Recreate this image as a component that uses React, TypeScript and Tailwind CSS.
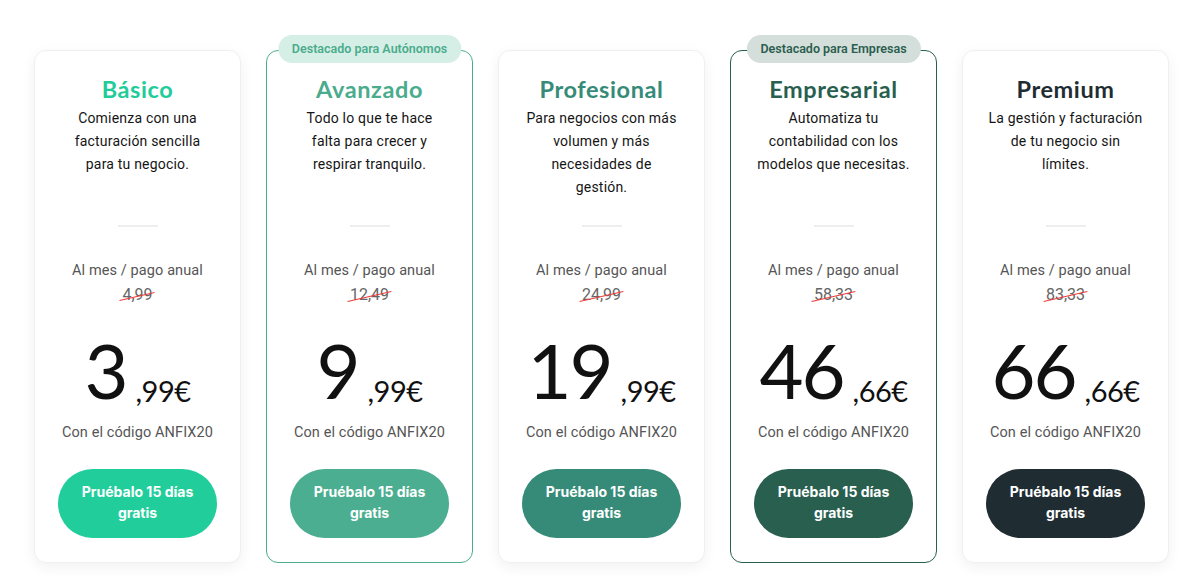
import React from "react";

interface Plan {
    name: string;
    lines: string[];
    oldPrice: string;
    whole: string;
    cents: string;
    titleClass: string;
    buttonClass: string;
    cardClass: string;
    badge?: string;
    badgeClass?: string;
}

const plans: Plan[] = [
    {
        name: "Básico",
        lines: ["Comienza con una", "facturación sencilla", "para tu negocio."],
        oldPrice: "4,99",
        whole: "3",
        cents: ",99€",
        titleClass: "text-[#22cc99]",
        buttonClass: "bg-[#21ce9b]",
        cardClass: "border-[#f0f0f0] shadow-[0_4px_14px_rgba(0,0,0,0.06)]",
    },
    {
        name: "Avanzado",
        lines: ["Todo lo que te hace", "falta para crecer y", "respirar tranquilo."],
        oldPrice: "12,49",
        whole: "9",
        cents: ",99€",
        titleClass: "text-[#4aac8d]",
        buttonClass: "bg-[#4bae90]",
        cardClass: "border-[#4aac8d]",
        badge: "Destacado para Autónomos",
        badgeClass: "bg-[#d6efe6] text-[#4aac8d]",
    },
    {
        name: "Profesional",
        lines: ["Para negocios con más", "volumen y más", "necesidades de", "gestión."],
        oldPrice: "24,99",
        whole: "19",
        cents: ",99€",
        titleClass: "text-[#368b78]",
        buttonClass: "bg-[#368b78]",
        cardClass: "border-[#f0f0f0] shadow-[0_4px_14px_rgba(0,0,0,0.06)]",
    },
    {
        name: "Empresarial",
        lines: ["Automatiza tu", "contabilidad con los", "modelos que necesitas."],
        oldPrice: "58,33",
        whole: "46",
        cents: ",66€",
        titleClass: "text-[#285f4f]",
        buttonClass: "bg-[#285f4f]",
        cardClass: "border-[#285f4f]",
        badge: "Destacado para Empresas",
        badgeClass: "bg-[#d4deda] text-[#2b5e4f]",
    },
    {
        name: "Premium",
        lines: ["La gestión y facturación", "de tu negocio sin", "límites."],
        oldPrice: "83,33",
        whole: "66",
        cents: ",66€",
        titleClass: "text-[#1f2d33]",
        buttonClass: "bg-[#1f2d33]",
        cardClass: "border-[#f0f0f0] shadow-[0_4px_14px_rgba(0,0,0,0.06)]",
    },
];

const PlanCard: React.FC<{ plan: Plan }> = ({ plan }) => {
    return (
        <div
            className={`relative w-[207px] shrink-0 rounded-[12px] border bg-white flex flex-col items-center pt-[24px] pb-[24px] ${plan.cardClass}`}
        >
            {plan.badge && (
                <div
                    className={`absolute -top-[16px] left-1/2 -translate-x-1/2 h-[28px] px-[14px] rounded-full flex items-center whitespace-nowrap text-[12.5px] font-semibold font-['Roboto',sans-serif] ${plan.badgeClass}`}
                >
                    {plan.badge}
                </div>
            )}
            <h2
                className={`text-[23.5px] leading-[28px] font-bold tracking-[0.6px] font-['Lato',sans-serif] ${plan.titleClass}`}
            >
                {plan.name}
            </h2>
            <div className="h-[118px] mt-[4px] w-[190px] flex flex-col items-center">
                {plan.lines.map((line) => (
                    <p
                        key={line}
                        className="whitespace-nowrap text-center text-[14px] leading-[23px] tracking-[0.2px] text-[#151515] font-['Roboto',sans-serif]"
                    >
                        {line}
                    </p>
                ))}
            </div>
            <div className="w-[40px] h-[2px] bg-[#eeeeee]" />
            <p className="mt-[34px] text-[14.5px] leading-[20px] tracking-[0.1px] text-[#555] font-['Roboto',sans-serif]">
                Al mes / pago anual
            </p>
            <span className="relative mt-[4px] text-[16px] leading-[20px] text-[#666] font-['Roboto',sans-serif]">
                {plan.oldPrice}
                <span className="absolute left-[-3px] right-[-3px] top-[11px] h-[1px] bg-[#f03a3a] -rotate-[13deg]" />
            </span>
            <div className="mt-[27px] flex items-baseline gap-[9px] font-['Lato',sans-serif] text-[#111]">
                <span className="text-[76px] leading-none font-normal tracking-[-2px]">{plan.whole}</span>
                <span className="text-[29px] leading-none translate-y-[3px] tracking-[-0.5px]">
                    {plan.cents}
                </span>
            </div>
            <p className="mt-[15px] text-[14.5px] leading-[20px] tracking-[0.1px] text-[#555] font-['Roboto',sans-serif]">
                Con el código ANFIX20
            </p>
            <button
                className={`mt-[26px] w-[159px] h-[69px] rounded-full text-white text-[14px] leading-[21px] font-bold font-['Inter',sans-serif] px-[20px] pb-[3px] ${plan.buttonClass}`}
            >
                Pruébalo 15 días gratis
            </button>
        </div>
    );
};

export default function App() {
    return (
        <div className="w-[1204px] h-[588px] bg-white flex items-start gap-[25px] pl-[34px] pt-[50px]">
            {plans.map((plan) => (
                <PlanCard key={plan.name} plan={plan} />
            ))}
        </div>
    );
}
